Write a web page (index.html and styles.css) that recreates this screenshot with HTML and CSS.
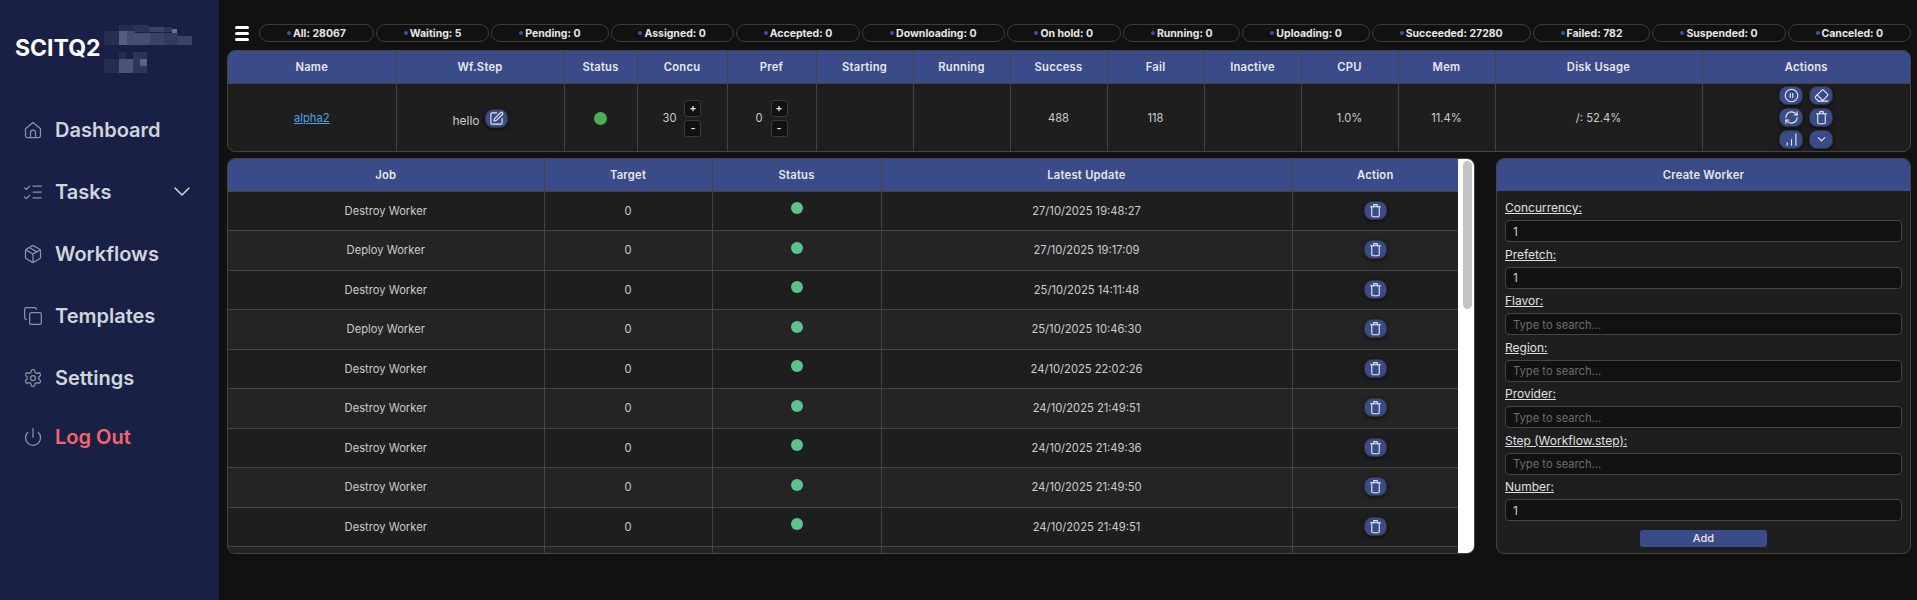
FILE: index.html
```html
<!DOCTYPE html>
<html lang="en">
<head>
  <meta charset="UTF-8">
  <meta name="viewport" content="width=device-width, initial-scale=1.0">
  <title>SCITQ2 Dashboard</title>
  <link rel="stylesheet" href="styles.css">
</head>
<body>
  <svg class="sprite" xmlns="http://www.w3.org/2000/svg">
    <symbol id="i-home" viewBox="0 0 24 24"><path d="M3 10.5 12 3l9 7.5V19a2 2 0 0 1-2 2H5a2 2 0 0 1-2-2z"/><path d="M9 21v-6a3 3 0 0 1 6 0v6"/></symbol>
    <symbol id="i-tasks" viewBox="0 0 24 24"><path d="m2 7 2 2 4-4"/><path d="m2 18 2 2 4-4"/><path d="M12 5h10"/><path d="M12 12h10"/><path d="M12 19h10"/></symbol>
    <symbol id="i-box" viewBox="0 0 24 24"><path d="M21 8a2 2 0 0 0-1-1.73l-7-4a2 2 0 0 0-2 0l-7 4A2 2 0 0 0 3 8v8a2 2 0 0 0 1 1.73l7 4a2 2 0 0 0 2 0l7-4A2 2 0 0 0 21 16Z"/><path d="m3.3 7 8.7 5 8.7-5"/><path d="M12 22V12"/><path d="m7.5 4.27 9 5.15"/></symbol>
    <symbol id="i-copy" viewBox="0 0 24 24"><rect x="8" y="8" width="14" height="14" rx="2"/><path d="M4 16c-1.1 0-2-.9-2-2V4c0-1.1.9-2 2-2h10c1.1 0 2 .9 2 2"/></symbol>
    <symbol id="i-gear" viewBox="0 0 24 24"><path d="M12.22 2h-.44a2 2 0 0 0-2 2v.18a2 2 0 0 1-1 1.73l-.43.25a2 2 0 0 1-2 0l-.15-.08a2 2 0 0 0-2.73.73l-.22.38a2 2 0 0 0 .73 2.73l.15.1a2 2 0 0 1 1 1.72v.51a2 2 0 0 1-1 1.74l-.15.09a2 2 0 0 0-.73 2.73l.22.38a2 2 0 0 0 2.73.73l.15-.08a2 2 0 0 1 2 0l.43.25a2 2 0 0 1 1 1.73V20a2 2 0 0 0 2 2h.44a2 2 0 0 0 2-2v-.18a2 2 0 0 1 1-1.73l.43-.25a2 2 0 0 1 2 0l.15.08a2 2 0 0 0 2.73-.73l.22-.39a2 2 0 0 0-.73-2.73l-.15-.08a2 2 0 0 1-1-1.74v-.5a2 2 0 0 1 1-1.74l.15-.09a2 2 0 0 0 .73-2.73l-.22-.38a2 2 0 0 0-2.73-.73l-.15.08a2 2 0 0 1-2 0l-.43-.25a2 2 0 0 1-1-1.73V4a2 2 0 0 0-2-2z"/><circle cx="12" cy="12" r="3"/></symbol>
    <symbol id="i-power" viewBox="0 0 24 24"><path d="M12 2v10"/><path d="M18.4 6.6a9 9 0 1 1-12.77.04"/></symbol>
    <symbol id="i-chevron" viewBox="0 0 24 24"><path d="m5 8 7 7 7-7"/></symbol>
    <symbol id="i-edit" viewBox="0 0 24 24"><path d="M12 3H5a2 2 0 0 0-2 2v14a2 2 0 0 0 2 2h14a2 2 0 0 0 2-2v-7"/><path d="M18.375 2.625a1 1 0 0 1 3 3l-9.013 9.014a2 2 0 0 1-.853.505l-2.873.84a.5.5 0 0 1-.62-.62l.84-2.873a2 2 0 0 1 .506-.852z"/></symbol>
    <symbol id="i-pause" viewBox="0 0 24 24"><circle cx="12" cy="12" r="10"/><path d="M10 9v6"/><path d="M14 9v6"/></symbol>
    <symbol id="i-eraser" viewBox="0 0 24 24"><path d="m7 21-4.3-4.3c-1-1-1-2.5 0-3.4l9.6-9.6c1-1 2.5-1 3.4 0l5.6 5.6c1 1 1 2.5 0 3.4L13 21"/><path d="M22 21H7"/><path d="m5 11 9 9"/></symbol>
    <symbol id="i-refresh" viewBox="0 0 24 24"><path d="M3 12a9 9 0 0 1 9-9 9.75 9.75 0 0 1 6.74 2.74L21 8"/><path d="M21 3v5h-5"/><path d="M21 12a9 9 0 0 1-9 9 9.75 9.75 0 0 1-6.74-2.74L3 16"/><path d="M8 16H3v5"/></symbol>
    <symbol id="i-trash" viewBox="0 0 24 24"><path d="M4 6h16"/><path d="M9 6V3.500a1 1 0 0 1 1-1h4a1 1 0 0 1 1 1V6"/><path d="M6 6v14a2 2 0 0 0 2 2h8a2 2 0 0 0 2-2V6"/></symbol>
    <symbol id="i-chart" viewBox="0 0 24 24"><path d="M5 21v-4"/><path d="M12 21v-9"/><path d="M19 21V3"/></symbol>
  </svg>

  <aside class="sidebar">
    <div class="logo">
      <span class="logo-text">SCITQ2</span>
      <svg class="logo-blur" width="88" height="48" viewBox="0 0 88 48">
        <rect x="15" y="0" width="15" height="7" fill="#252e52"/>
        <rect x="30" y="0" width="15" height="7" fill="#2b3458"/>
        <rect x="45" y="2" width="15" height="5" fill="#3b4368"/>
        <rect x="60" y="2" width="8" height="5" fill="#2d3659"/>
        <rect x="68" y="4" width="5" height="5" fill="#6a7090"/>
        <rect x="0" y="6" width="15" height="14" fill="#262f52"/>
        <rect x="15" y="6" width="8" height="14" fill="#565d80"/>
        <rect x="23" y="6" width="8" height="14" fill="#454d72"/>
        <rect x="31" y="8" width="15" height="12" fill="#49506f"/>
        <rect x="46" y="8" width="14" height="12" fill="#3a4266"/>
        <rect x="60" y="8" width="14" height="12" fill="#323a60"/>
        <rect x="74" y="11" width="14" height="9" fill="#3a4266"/>
        <rect x="15" y="27" width="7" height="7" fill="#252e52"/>
        <rect x="29" y="27" width="14" height="7" fill="#2b3458"/>
        <rect x="0" y="34" width="15" height="14" fill="#252e52"/>
        <rect x="15" y="34" width="14" height="14" fill="#4d5478"/>
        <rect x="29" y="34" width="14" height="14" fill="#2f3759"/>
        <rect x="36" y="34" width="7" height="7" fill="#5b6285"/>
      </svg>
    </div>
    <nav class="nav">
      <a class="nav-item" href="#"><svg class="nav-icon"><use href="#i-home"/></svg>Dashboard</a>
      <a class="nav-item" href="#"><svg class="nav-icon"><use href="#i-tasks"/></svg>Tasks<svg class="nav-chevron"><use href="#i-chevron"/></svg></a>
      <a class="nav-item" href="#"><svg class="nav-icon"><use href="#i-box"/></svg>Workflows</a>
      <a class="nav-item" href="#"><svg class="nav-icon"><use href="#i-copy"/></svg>Templates</a>
      <a class="nav-item" href="#"><svg class="nav-icon"><use href="#i-gear"/></svg>Settings</a>
      <a class="nav-item logout" href="#"><svg class="nav-icon"><use href="#i-power"/></svg>Log Out</a>
    </nav>
  </aside>

  <main class="main">
    <div class="topbar">
      <button class="menu-btn" aria-label="Menu"><span></span><span></span><span></span></button>
      <div class="pills">
        <span class="pill">All: 28067</span>
        <span class="pill">Waiting: 5</span>
        <span class="pill">Pending: 0</span>
        <span class="pill">Assigned: 0</span>
        <span class="pill">Accepted: 0</span>
        <span class="pill">Downloading: 0</span>
        <span class="pill">On hold: 0</span>
        <span class="pill">Running: 0</span>
        <span class="pill">Uploading: 0</span>
        <span class="pill">Succeeded: 27280</span>
        <span class="pill">Failed: 782</span>
        <span class="pill">Suspended: 0</span>
        <span class="pill">Canceled: 0</span>
      </div>
    </div>

    <div class="table-wrap workers">
      <table class="table">
        <thead>
          <tr><th>Name</th><th>Wf.Step</th><th>Status</th><th>Concu</th><th>Pref</th><th>Starting</th><th>Running</th><th>Success</th><th>Fail</th><th>Inactive</th><th>CPU</th><th>Mem</th><th>Disk Usage</th><th>Actions</th></tr>
        </thead>
        <tbody>
          <tr>
            <td><a class="worker-link" href="#">alpha2</a></td>
            <td><div class="step"><span class="step-name">hello</span><button class="icon-btn"><svg><use href="#i-edit"/></svg></button></div></td>
            <td><span class="status-dot"></span></td>
            <td><div class="stepper"><span>30</span><div class="stepper-btns"><button>+</button><button>-</button></div></div></td>
            <td><div class="stepper"><span>0</span><div class="stepper-btns"><button>+</button><button>-</button></div></div></td>
            <td></td>
            <td></td>
            <td>488</td>
            <td>118</td>
            <td></td>
            <td>1.0%</td>
            <td>11.4%</td>
            <td>/: 52.4%</td>
            <td class="actions-cell">
              <div class="actions">
                <button class="icon-btn"><svg><use href="#i-pause"/></svg></button>
                <button class="icon-btn"><svg><use href="#i-eraser"/></svg></button>
                <button class="icon-btn"><svg><use href="#i-refresh"/></svg></button>
                <button class="icon-btn"><svg><use href="#i-trash"/></svg></button>
                <button class="icon-btn"><svg><use href="#i-chart"/></svg></button>
                <button class="icon-btn"><svg class="icon-small"><use href="#i-chevron"/></svg></button>
              </div>
            </td>
          </tr>
        </tbody>
      </table>
    </div>

    <div class="lower">
      <div class="table-wrap jobs">
        <div class="jobs-scroll">
          <table class="table">
            <thead>
              <tr><th>Job</th><th>Target</th><th>Status</th><th>Latest Update</th><th>Action</th></tr>
            </thead>
            <tbody>
              <tr><td>Destroy Worker</td><td>0</td><td><span class="job-dot"></span></td><td>27/10/2025 19:48:27</td><td><button class="icon-btn"><svg><use href="#i-trash"/></svg></button></td></tr>
              <tr><td>Deploy Worker</td><td>0</td><td><span class="job-dot"></span></td><td>27/10/2025 19:17:09</td><td><button class="icon-btn"><svg><use href="#i-trash"/></svg></button></td></tr>
              <tr><td>Destroy Worker</td><td>0</td><td><span class="job-dot"></span></td><td>25/10/2025 14:11:48</td><td><button class="icon-btn"><svg><use href="#i-trash"/></svg></button></td></tr>
              <tr><td>Deploy Worker</td><td>0</td><td><span class="job-dot"></span></td><td>25/10/2025 10:46:30</td><td><button class="icon-btn"><svg><use href="#i-trash"/></svg></button></td></tr>
              <tr><td>Destroy Worker</td><td>0</td><td><span class="job-dot"></span></td><td>24/10/2025 22:02:26</td><td><button class="icon-btn"><svg><use href="#i-trash"/></svg></button></td></tr>
              <tr><td>Destroy Worker</td><td>0</td><td><span class="job-dot"></span></td><td>24/10/2025 21:49:51</td><td><button class="icon-btn"><svg><use href="#i-trash"/></svg></button></td></tr>
              <tr><td>Destroy Worker</td><td>0</td><td><span class="job-dot"></span></td><td>24/10/2025 21:49:36</td><td><button class="icon-btn"><svg><use href="#i-trash"/></svg></button></td></tr>
              <tr><td>Destroy Worker</td><td>0</td><td><span class="job-dot"></span></td><td>24/10/2025 21:49:50</td><td><button class="icon-btn"><svg><use href="#i-trash"/></svg></button></td></tr>
              <tr><td>Destroy Worker</td><td>0</td><td><span class="job-dot"></span></td><td>24/10/2025 21:49:51</td><td><button class="icon-btn"><svg><use href="#i-trash"/></svg></button></td></tr>
              <tr><td></td><td></td><td></td><td></td><td></td></tr>
            </tbody>
          </table>
        </div>
        <div class="scrollbar"><div class="scrollbar-thumb"></div></div>
      </div>

      <form class="create-worker">
        <h2 class="panel-title">Create Worker</h2>
        <div class="panel-body">
          <div class="field"><label for="concurrency">Concurrency:</label><input id="concurrency" type="text" value="1"></div>
          <div class="field"><label for="prefetch">Prefetch:</label><input id="prefetch" type="text" value="1"></div>
          <div class="field"><label for="flavor">Flavor:</label><input id="flavor" type="text" placeholder="Type to search..."></div>
          <div class="field"><label for="region">Region:</label><input id="region" type="text" placeholder="Type to search..."></div>
          <div class="field"><label for="provider">Provider:</label><input id="provider" type="text" placeholder="Type to search..."></div>
          <div class="field"><label for="step">Step (Workflow.step):</label><input id="step" type="text" placeholder="Type to search..."></div>
          <div class="field"><label for="number">Number:</label><input id="number" type="text" value="1"></div>
          <button class="add-btn" type="button">Add</button>
        </div>
      </form>
    </div>
  </main>
</body>
</html>
```

FILE: styles.css
```css
* {
  box-sizing: border-box;
}
body {
  font-family: Inter, "Liberation Sans", sans-serif;
  background-color: #111;
  color: #ccc;
  margin: 0;
  padding: 0;
  display: flex;
  height: 100vh;
  overflow: hidden;
}
button {
  font-family: inherit;
  cursor: pointer;
}
.sprite {
  display: none;
}

/* sidebar */
.sidebar {
  width: 219px;
  flex: none;
  background-color: #182145;
  padding-top: 25px;
}
.logo {
  display: flex;
  align-items: center;
  height: 48px;
  padding-left: 15px;
  margin-bottom: 26px;
}
.logo-text {
  font-size: 23px;
  font-weight: 700;
  color: #fff;
  margin-right: 3px;
  margin-bottom: 2px;
}
.nav-item {
  display: flex;
  align-items: center;
  height: 62px;
  padding-left: 23px;
  padding-right: 25px;
  font-size: 20px;
  font-weight: 600;
  color: #d1d5db;
  text-decoration: none;
}
.nav-item.logout {
  height: 56px;
  color: #f8646c;
}
.nav-icon {
  width: 20px;
  height: 20px;
  margin-right: 12px;
  fill: none;
  stroke: #8b93a8;
  stroke-width: 1.5;
  stroke-linecap: round;
  stroke-linejoin: round;
}
.nav-chevron {
  width: 24px;
  height: 24px;
  margin-left: auto;
  fill: none;
  stroke: #d1d5db;
  stroke-width: 1.5;
  stroke-linecap: round;
  stroke-linejoin: round;
}

/* main area */
.main {
  flex: 1;
  min-width: 0;
  padding: 24px 6px 0 8px;
}
.topbar {
  display: flex;
  align-items: center;
  height: 18px;
  margin-bottom: 8px;
}
.menu-btn {
  display: flex;
  flex-direction: column;
  justify-content: space-between;
  width: 14px;
  height: 15px;
  padding: 0;
  margin: 0 10px 0 8px;
  background: none;
  border: none;
  flex: none;
}
.menu-btn span {
  display: block;
  height: 3px;
  border-radius: 2px;
  background-color: #fff;
}
.pills {
  flex: 1;
  display: flex;
  gap: 2px;
}
.pill {
  flex: 1 1 auto;
  height: 18px;
  display: flex;
  align-items: center;
  justify-content: center;
  padding: 0 8px;
  border: 1px solid #3c3c3c;
  border-radius: 9px;
  font-size: 10.500px;
  font-weight: 700;
  color: #e6e6e6;
  white-space: nowrap;
}
.pill::before {
  content: "";
  width: 4px;
  height: 4px;
  border-radius: 50%;
  background-color: #3f52a0;
  margin-right: 2px;
}

/* tables */
.table-wrap {
  border: 1px solid #444;
  border-radius: 8px;
  overflow: hidden;
  background-color: #1e1e1e;
}
.table {
  width: 100%;
  border-collapse: collapse;
  table-layout: fixed;
  font-size: 11.200px;
}
.table th {
  height: 32px;
  background-color: #3a4b8a;
  color: #e8e8e8;
  font-weight: 600;
  text-align: center;
  border: 1px solid #444;
  border-top: none;
  padding: 0;
  letter-spacing: .25px;
}
.table td {
  text-align: center;
  border: 1px solid #444;
  padding: 0;
  color: #ccc;
}
.table th:first-child,
.table td:first-child {
  border-left: none;
}
.table th:last-child,
.table td:last-child {
  border-right: none;
}
.icon-btn {
  width: 23px;
  height: 19px;
  display: inline-flex;
  align-items: center;
  justify-content: center;
  padding: 0;
  border: 1px solid #333;
  border-radius: 8px;
  background-color: #3a4b8a;
  box-shadow: 0 1px 4px rgba(0, 0, 0, .6);
}
.icon-btn svg {
  width: 15px;
  height: 15px;
  fill: none;
  stroke: #e6e9f5;
  stroke-width: 1.8;
  stroke-linecap: round;
  stroke-linejoin: round;
}
.icon-btn .icon-small {
  width: 11px;
  height: 11px;
  stroke-width: 2.400;
}

/* workers table */
.workers {
  height: 102px;
}
.workers th:nth-child(1), .workers th:nth-child(2) { width: 168px; }
.workers th:nth-child(3) { width: 73px; }
.workers th:nth-child(4) { width: 90px; }
.workers th:nth-child(5) { width: 89px; }
.workers th:nth-child(n+6):nth-child(-n+12) { width: 97px; }
.workers th:nth-child(13) { width: 207px; }
.workers td {
  height: 68px;
  padding-top: 2px;
  border-bottom: none;
}
.workers .actions-cell {
  padding-top: 0;
}
.worker-link {
  color: #4fa3e0;
}
.step {
  display: flex;
  align-items: center;
  justify-content: center;
  gap: 5px;
}
.step-name {
  font-size: 12px;
  margin-top: 5px;
}
.status-dot {
  display: inline-block;
  width: 13px;
  height: 13px;
  border-radius: 50%;
  background-color: #4caf50;
  vertical-align: middle;
}
.stepper {
  display: flex;
  align-items: center;
  justify-content: center;
  gap: 8px;
}
.stepper-btns {
  display: flex;
  flex-direction: column;
  gap: 3px;
}
.stepper-btns button {
  width: 17px;
  height: 17px;
  padding: 0;
  background-color: #111;
  border: 1px solid #3a3a3a;
  border-radius: 3px;
  color: #ddd;
  font-size: 11px;
  font-weight: 600;
  line-height: 1;
}
.actions {
  display: grid;
  grid-template-columns: 24px 24px;
  justify-content: center;
  gap: 3px 6px;
}
.actions .icon-btn {
  width: 24px;
  height: 19px;
}

/* lower part */
.lower {
  display: flex;
  justify-content: space-between;
  margin-top: 6px;
  height: 396px;
}
.jobs {
  width: 1248px;
  display: flex;
}
.jobs-scroll {
  flex: 1;
  min-width: 0;
  overflow: hidden;
}
.scrollbar {
  flex: none;
  width: 16px;
  padding: 2px 2px 0 5px;
  background-color: #fff;
}
.scrollbar-thumb {
  height: 148px;
  border-radius: 5px;
  background-color: #c4c4c4;
}
.jobs th:nth-child(1) { width: 316px; }
.jobs th:nth-child(2) { width: 168px; }
.jobs th:nth-child(3) { width: 169px; }
.jobs th:nth-child(4) { width: 411px; }
.jobs td {
  height: 39.500px;
}
.jobs tbody tr:nth-child(even) td {
  background-color: #242424;
}
.job-dot {
  display: inline-block;
  width: 12px;
  height: 12px;
  border-radius: 50%;
  background-color: #5bc48e;
  vertical-align: middle;
  margin-bottom: 5px;
}
.jobs .icon-btn {
  margin-bottom: 1px;
  vertical-align: middle;
}

/* create worker */
.create-worker {
  width: 415px;
  border: 1px solid #444;
  border-radius: 8px;
  overflow: hidden;
  background-color: #1e1e1e;
}
.panel-title {
  margin: 0;
  height: 32px;
  display: flex;
  align-items: center;
  justify-content: center;
  background-color: #3a4b8a;
  color: #e8e8e8;
  font-size: 11.200px;
  font-weight: 600;
  letter-spacing: .25px;
}
.panel-body {
  padding: 9px 8px 0;
  display: flex;
  flex-direction: column;
}
.field {
  margin-bottom: 4.500px;
}
.field label {
  display: block;
  height: 16px;
  line-height: 16px;
  margin-bottom: 4px;
  font-size: 12px;
  color: #e0e0e0;
  text-decoration: underline;
}
.field input {
  display: block;
  width: 100%;
  height: 22px;
  padding: 0 7px;
  background-color: #111;
  border: 1px solid #444;
  border-radius: 4px;
  color: #ccc;
  font-family: inherit;
  font-size: 12px;
  outline: none;
}
.field input::placeholder {
  font-size: 11.200px;
  color: #6c6c6c;
}
.add-btn {
  align-self: center;
  width: 127px;
  height: 17px;
  margin-top: 4px;
  padding: 0;
  background-color: #3a4b8a;
  border: none;
  border-radius: 3px;
  color: #e8e8e8;
  font-size: 11px;
  font-weight: 500;
}
```
